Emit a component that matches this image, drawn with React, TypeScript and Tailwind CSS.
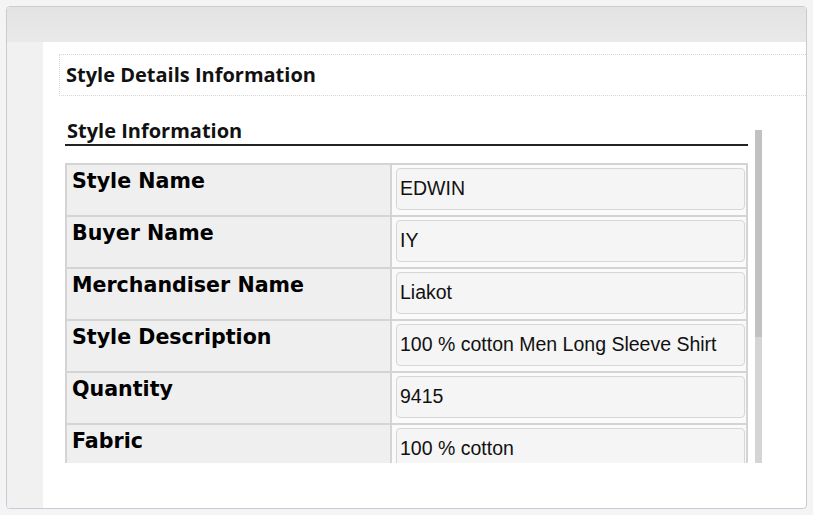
import React from "react";

const rows = [
  { label: "Style Name", value: "EDWIN" },
  { label: "Buyer Name", value: "IY" },
  { label: "Merchandiser Name", value: "Liakot" },
  { label: "Style Description", value: "100 % cotton Men Long Sleeve Shirt" },
  { label: "Quantity", value: "9415" },
  { label: "Fabric", value: "100 % cotton" },
];

export default function App() {
  return (
    <div className="h-[515px] w-[813px] bg-[#f4f4f4] p-[6px]">
      <div className="flex h-full flex-col overflow-hidden rounded-[4px] border border-[#c6ccd6] bg-white">
        {/* top band */}
        <div className="h-[35px] shrink-0 bg-gradient-to-b from-[#e3e3e3] to-[#e9e9e9]" />

        <div className="flex flex-1">
          {/* left strip */}
          <div className="w-[36px] shrink-0 bg-[#f1f1f1]" />

          <div className="flex-1 pl-[16px] pt-[12px]">
            <div className="flex h-[42px] items-center border-y border-l border-dotted border-[#d6d6d6] pl-[6px]">
              <h1 className="font-['Open_Sans',sans-serif] text-[20px] font-bold text-[#111]">
                Style Details Information
              </h1>
            </div>

            <div className="flex h-[367px] pl-[6px]">
              <div className="w-[683px] overflow-hidden pt-[21px]">
                <div className="border-b-2 border-[#222] pl-[2px]">
                  <h2 className="font-['Open_Sans',sans-serif] text-[20px] font-bold leading-[27px] text-[#111]">
                    Style Information
                  </h2>
                </div>

                <div className="mt-[17px] grid grid-cols-[323px_354px] gap-[2px] bg-[#d4d4d4] p-[2px]">
                  {rows.map((r) => (
                    <React.Fragment key={r.label}>
                      <div className="h-[50px] bg-[#efefef] pl-[5px] pt-[4px] font-['DejaVu_Sans',sans-serif] text-[20.6px] font-bold leading-[24px] text-black">
                        {r.label}
                      </div>
                      <div className="h-[50px] bg-[#fafafa] pl-[4px] pr-[1px] pt-[3px]">
                        <div className="flex h-[42px] items-center rounded-[4px] border border-[#d6d6d6] bg-[#f5f5f5] pl-[3px] font-['Liberation_Sans',sans-serif] text-[19.5px] text-[#111]">
                          {r.value}
                        </div>
                      </div>
                    </React.Fragment>
                  ))}
                </div>
              </div>

              {/* scrollbar */}
              <div className="ml-[7px] mt-[34px] flex h-[333px] w-[7px] flex-col">
                <div className="h-[207px] bg-[#c1c1c1]" />
                <div className="flex-1 bg-[#d5d5d5]" />
              </div>
            </div>
          </div>
        </div>
      </div>
    </div>
  );
}
